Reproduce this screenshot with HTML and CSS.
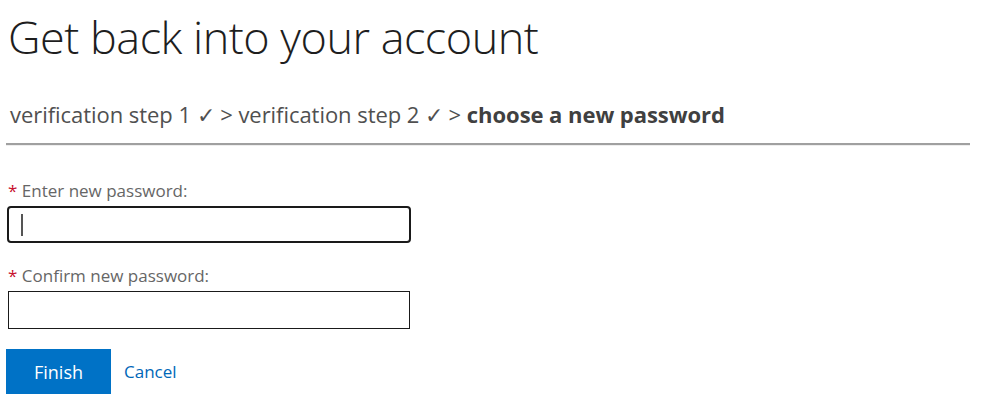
FILE: index.html
```html
<!DOCTYPE html>
<html>
<head>
<meta charset="utf-8">
<link rel="stylesheet" href="styles.css">
</head>
<body>
<div class="page">
  <h1 class="title">Get back into your account</h1>
  <div class="steps">verification step 1 ✓ &gt; verification step 2 ✓ &gt; <b class="current">choose a new password</b></div>
  <hr class="divider">
  <form class="form">
    <div class="field">
      <label class="label"><span class="req">*</span> Enter new password:</label>
      <div class="input focused"><span class="caret"></span></div>
    </div>
    <div class="field">
      <label class="label"><span class="req">*</span> Confirm new password:</label>
      <div class="input"></div>
    </div>
    <div class="actions">
      <button type="button" class="btn">Finish</button>
      <a class="link" href="#">Cancel</a>
    </div>
  </form>
</div>
</body>
</html>
```

FILE: styles.css
```css
* { box-sizing: border-box; }
html, body { margin: 0; padding: 0; background: #fff; }
body { font-family: "Open Sans", "Segoe UI", sans-serif; color: #333; }
.page { padding: 7px 0 0 6px; width: 970px; }
.title {
  margin: 0 0 0 2px;
  font-weight: 300;
  font-size: 45px;
  line-height: 60px;
  color: #1e1e1e;
  letter-spacing: -0.5px;
}
.steps {
  margin: 33px 0 0 4px;
  font-size: 22px;
  line-height: 28px;
  color: #505050;
  letter-spacing: -0.05px;
}
.current { font-weight: 700; color: #404040; }
.divider {
  margin: 15px 0 0 0;
  width: 964px;
  height: 3px;
  border: 0;
  border-top: 2px solid #a0a0a0;
  border-bottom: 1px solid #eee;
}
.form { margin-top: 35px; padding-left: 2px; display: flex; flex-direction: column; }
.field { display: flex; flex-direction: column; margin-bottom: 23px; }
.label { font-size: 17px; line-height: 20px; color: #666; margin-bottom: 5px; }
.req { color: #c8102e; }
.input {
  width: 402px;
  height: 38px;
  border: 1px solid #1a1a1a;
  background: #fff;
  display: flex;
  align-items: center;
  padding-left: 12px;
}
.input.focused {
  border: 2px solid #1a1a1a;
  border-radius: 4px;
  width: 404px;
  height: 37px;
  margin-left: -1px;
  padding-left: 12px;
}
.caret { width: 2px; height: 22px; background: #555; }
.actions { display: flex; align-items: center; gap: 13px; margin-left: -2px; margin-top: -3px; }
.btn {
  width: 105px;
  height: 45px;
  border: 0;
  background: #0072c6;
  color: #fff;
  font-family: "Open Sans", sans-serif;
  font-size: 18px;
  padding: 0;
}
.link { color: #0067b8; text-decoration: none; font-size: 17px; }
```
